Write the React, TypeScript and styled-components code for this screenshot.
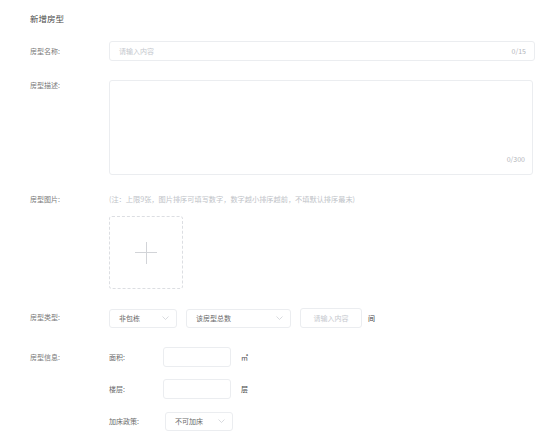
import React from 'react';
import styled, { createGlobalStyle } from 'styled-components';

const GlobalStyle = createGlobalStyle`
  body {
    margin: 0;
    background: #fff;
    font-family: 'Noto Sans CJK SC', 'Noto Sans', sans-serif;
  }
`;

const Chevron = () => (
  <svg width='7' height='4' viewBox='0 0 7 4'>
    <polyline
      points='0.5,0.5 3.5,3.5 6.5,0.5'
      fill='none'
      stroke='#c8cbd1'
      strokeWidth='0.7'
    />
  </svg>
);

const App = () => {
  return (
    <Page>
      <GlobalStyle />
      <Title>新增房型</Title>

      <FormItem>
        <Label $lh={20}>房型名称:</Label>
        <InputBox $grow>
          <Placeholder>请输入内容</Placeholder>
          <Counter>0/15</Counter>
        </InputBox>
      </FormItem>

      <FormItem>
        <Label $lh={10}>房型描述:</Label>
        <TextArea>
          <AreaCounter>0/300</AreaCounter>
        </TextArea>
      </FormItem>

      <FormItem>
        <Label $lh={10}>房型图片:</Label>
        <Column>
          <Hint>(注：上限9张，图片排序可填写数字，数字越小排序越前，不填默认排序最末)</Hint>
          <Upload>
            <Plus />
          </Upload>
        </Column>
      </FormItem>

      <FormItem>
        <Label $lh={19}>房型类型:</Label>
        <Inline>
          <Select $w={68}>
            <span>非包栋</span>
            <Chevron />
          </Select>
          <Select $w={105}>
            <span>该房型总数</span>
            <Chevron />
          </Select>
          <InputBox $w={62} $center>
            <Placeholder>请输入内容</Placeholder>
          </InputBox>
          <Unit>间</Unit>
        </Inline>
      </FormItem>

      <FormItem>
        <Label $lh={20}>房型信息:</Label>
        <Column>
          <SubRow>
            <SubLabel>面积:</SubLabel>
            <InputBox $w={68} />
            <UnitWide>㎡</UnitWide>
          </SubRow>
          <SubRow>
            <SubLabel>楼层:</SubLabel>
            <InputBox $w={68} />
            <UnitWide>层</UnitWide>
          </SubRow>
          <SubRow>
            <SubLabel>加床政策:</SubLabel>
            <Select $w={68} $shift={2}>
              <span>不可加床</span>
              <Chevron />
            </Select>
          </SubRow>
        </Column>
      </FormItem>
    </Page>
  );
};

const Page = styled.div`
  width: 554px;
  box-sizing: border-box;
  padding: 13px 19px 0 30px;
  color: #777;
`;

const Title = styled.div`
  font-size: 8.5px;
  line-height: 10px;
  color: #4a4a4a;
  margin-bottom: 18px;
`;

const FormItem = styled.div`
  display: flex;
  align-items: flex-start;
  margin-bottom: 19px;
`;

const Label = styled.div<{ $lh: number }>`
  flex: none;
  width: 79px;
  font-size: 7px;
  line-height: ${({ $lh }) => $lh}px;
  color: #7a7a7a;
`;

const InputBox = styled.div<{ $w?: number; $grow?: boolean; $center?: boolean }>`
  box-sizing: border-box;
  height: 20px;
  flex: ${({ $grow }) => ($grow ? '1' : 'none')};
  width: ${({ $w }) => ($w ? `${$w}px` : 'auto')};
  border: 1px solid #ebedf0;
  border-radius: 3px;
  display: flex;
  align-items: center;
  justify-content: ${({ $center }) => ($center ? 'center' : 'flex-start')};
  padding: ${({ $center }) => ($center ? '0' : '0 8px 0 9px')};
  font-size: 7px;
`;

const Placeholder = styled.span`
  color: #c5c8ce;
`;

const Counter = styled.span`
  margin-left: auto;
  color: #b3b5ba;
`;

const TextArea = styled.div`
  position: relative;
  flex: 1;
  height: 95px;
  margin-right: 2px;
  box-sizing: border-box;
  border: 1px solid #ebedf0;
  border-radius: 3px;
`;

const AreaCounter = styled.span`
  position: absolute;
  right: 7px;
  bottom: 10px;
  font-size: 7px;
  line-height: 10px;
  color: #b3b5ba;
`;

const Column = styled.div`
  display: flex;
  flex-direction: column;
  align-items: flex-start;
`;

const Hint = styled.div`
  font-size: 7.2px;
  line-height: 10px;
  color: #c0c3c8;
  white-space: nowrap;
`;

const Upload = styled.div`
  margin-top: 12px;
  width: 74px;
  height: 73px;
  box-sizing: border-box;
  border: 1px dashed #dcdee2;
  border-radius: 3px;
  display: flex;
  align-items: center;
  justify-content: center;
`;

const Plus = styled.div`
  position: relative;
  width: 22px;
  height: 22px;

  &::before,
  &::after {
    content: '';
    position: absolute;
    background: #d2d4d8;
  }

  &::before {
    left: 0;
    right: 0;
    top: 10.5px;
    height: 1px;
  }

  &::after {
    top: 0;
    bottom: 0;
    left: 10.5px;
    width: 1px;
  }
`;

const Inline = styled.div`
  display: flex;
  align-items: center;
  gap: 9px;
`;

const Select = styled.div<{ $w: number; $shift?: number }>`
  box-sizing: border-box;
  width: ${({ $w }) => $w}px;
  height: 19px;
  margin-left: ${({ $shift }) => $shift || 0}px;
  border: 1px solid #ebedf0;
  border-radius: 3px;
  display: flex;
  align-items: center;
  justify-content: space-between;
  padding: 0 7px 0 9px;
  font-size: 7px;
  color: #6a6a6a;
`;

const Unit = styled.span`
  margin-left: -3px;
  font-size: 7px;
  color: #444;
`;

const SubRow = styled.div`
  display: flex;
  align-items: center;
  height: 20px;
  margin-bottom: 12px;

  &:last-child {
    margin-bottom: 0;
  }
`;

const SubLabel = styled.span`
  width: 54px;
  font-size: 7px;
  color: #6a6a6a;
`;

const UnitWide = styled.span`
  margin-left: 10px;
  font-size: 7px;
  color: #444;
`;

export default App;
